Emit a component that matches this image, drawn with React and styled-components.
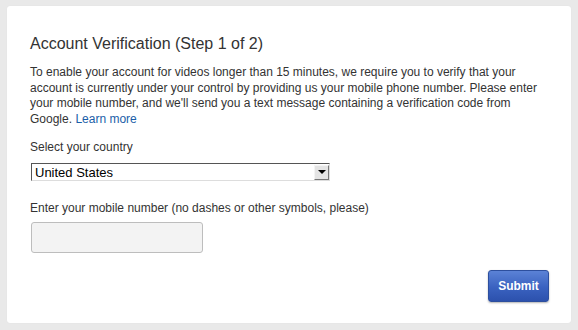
import React from "react";
import styled, { createGlobalStyle } from "styled-components";

const Global = createGlobalStyle`
  html, body {
    margin: 0;
    padding: 0;
    background: #e9e9e9;
    font-family: "Liberation Sans", Arial, sans-serif;
  }
`;

const Page = styled.div`
  width: 578px;
  height: 330px;
  padding: 6px 7px 7px 7px;
  box-sizing: border-box;
`;

const Card = styled.div`
  background: #fff;
  border-radius: 3px;
  height: 317px;
  box-sizing: border-box;
  padding: 28px 22px 0 23px;
  box-shadow: 0 0 1px rgba(0, 0, 0, 0.08);
  display: flex;
  flex-direction: column;
`;

const Title = styled.h2`
  margin: 0 0 11px;
  font-size: 16px;
  font-weight: normal;
  color: #333;
  line-height: 20px;
`;

const Text = styled.p`
  margin: 0 0 12px;
  font-size: 12px;
  line-height: 15.5px;
  color: #333;
  a {
    color: #1b5ea8;
    text-decoration: none;
  }
`;

const Label = styled.div`
  font-size: 12px;
  line-height: 16px;
  color: #333;
  margin-bottom: ${(p) => p.gap || 8}px;
`;

const Select = styled.div`
  width: 299px;
  height: 18px;
  box-sizing: border-box;
  margin-left: 1px;
  border-top: 1px solid #555;
  border-left: 1px solid #555;
  border-right: 1px solid #ddd;
  border-bottom: 1px solid #ddd;
  display: flex;
  align-items: center;
  justify-content: space-between;
  font-size: 13px;
  color: #000;
  padding-left: 3px;
  margin-bottom: 19px;
`;

const Arrow = styled.span`
  width: 15px;
  height: 15px;
  box-sizing: border-box;
  background: #e4e4e4;
  border-top: 1px solid #f4f4f4;
  border-left: 1px solid #f4f4f4;
  border-right: 1px solid #777;
  border-bottom: 1px solid #777;
  display: flex;
  align-items: center;
  justify-content: center;
  &::after {
    content: "";
    border-left: 4px solid transparent;
    border-right: 4px solid transparent;
    border-top: 4px solid #000;
  }
`;

const Input = styled.div`
  width: 172px;
  height: 31px;
  box-sizing: border-box;
  margin-left: 1px;
  background: #f3f3f3;
  border: 1px solid #bdbdbd;
  border-radius: 3px;
`;

const Footer = styled.div`
  display: flex;
  justify-content: flex-end;
  margin-top: 17px;
`;

const Button = styled.button`
  width: 61px;
  height: 32px;
  border: 1px solid #2d4f9e;
  border-radius: 3px;
  background: linear-gradient(#5b82d6, #3a62c0 55%, #2c51ad);
  color: #fff;
  font-family: "Liberation Sans", Arial, sans-serif;
  font-weight: bold;
  font-size: 12px;
  box-shadow: 0 1px 2px rgba(0, 0, 0, 0.3);
  padding: 0;
`;

export default function App() {
  return (
    <>
      <Global />
      <Page>
        <Card>
          <Title>Account Verification (Step 1 of 2)</Title>
          <Text>
            To enable your account for videos longer than 15 minutes, we require you to verify that your
            account is currently under your control by providing us your mobile phone number. Please enter
            your mobile number, and we'll send you a text message containing a verification code from
            Google. <a href="#">Learn more</a>
          </Text>
          <Label>Select your country</Label>
          <Select>
            United States
            <Arrow />
          </Select>
          <Label gap={6}>Enter your mobile number (no dashes or other symbols, please)</Label>
          <Input />
          <Footer>
            <Button>Submit</Button>
          </Footer>
        </Card>
      </Page>
    </>
  );
}
